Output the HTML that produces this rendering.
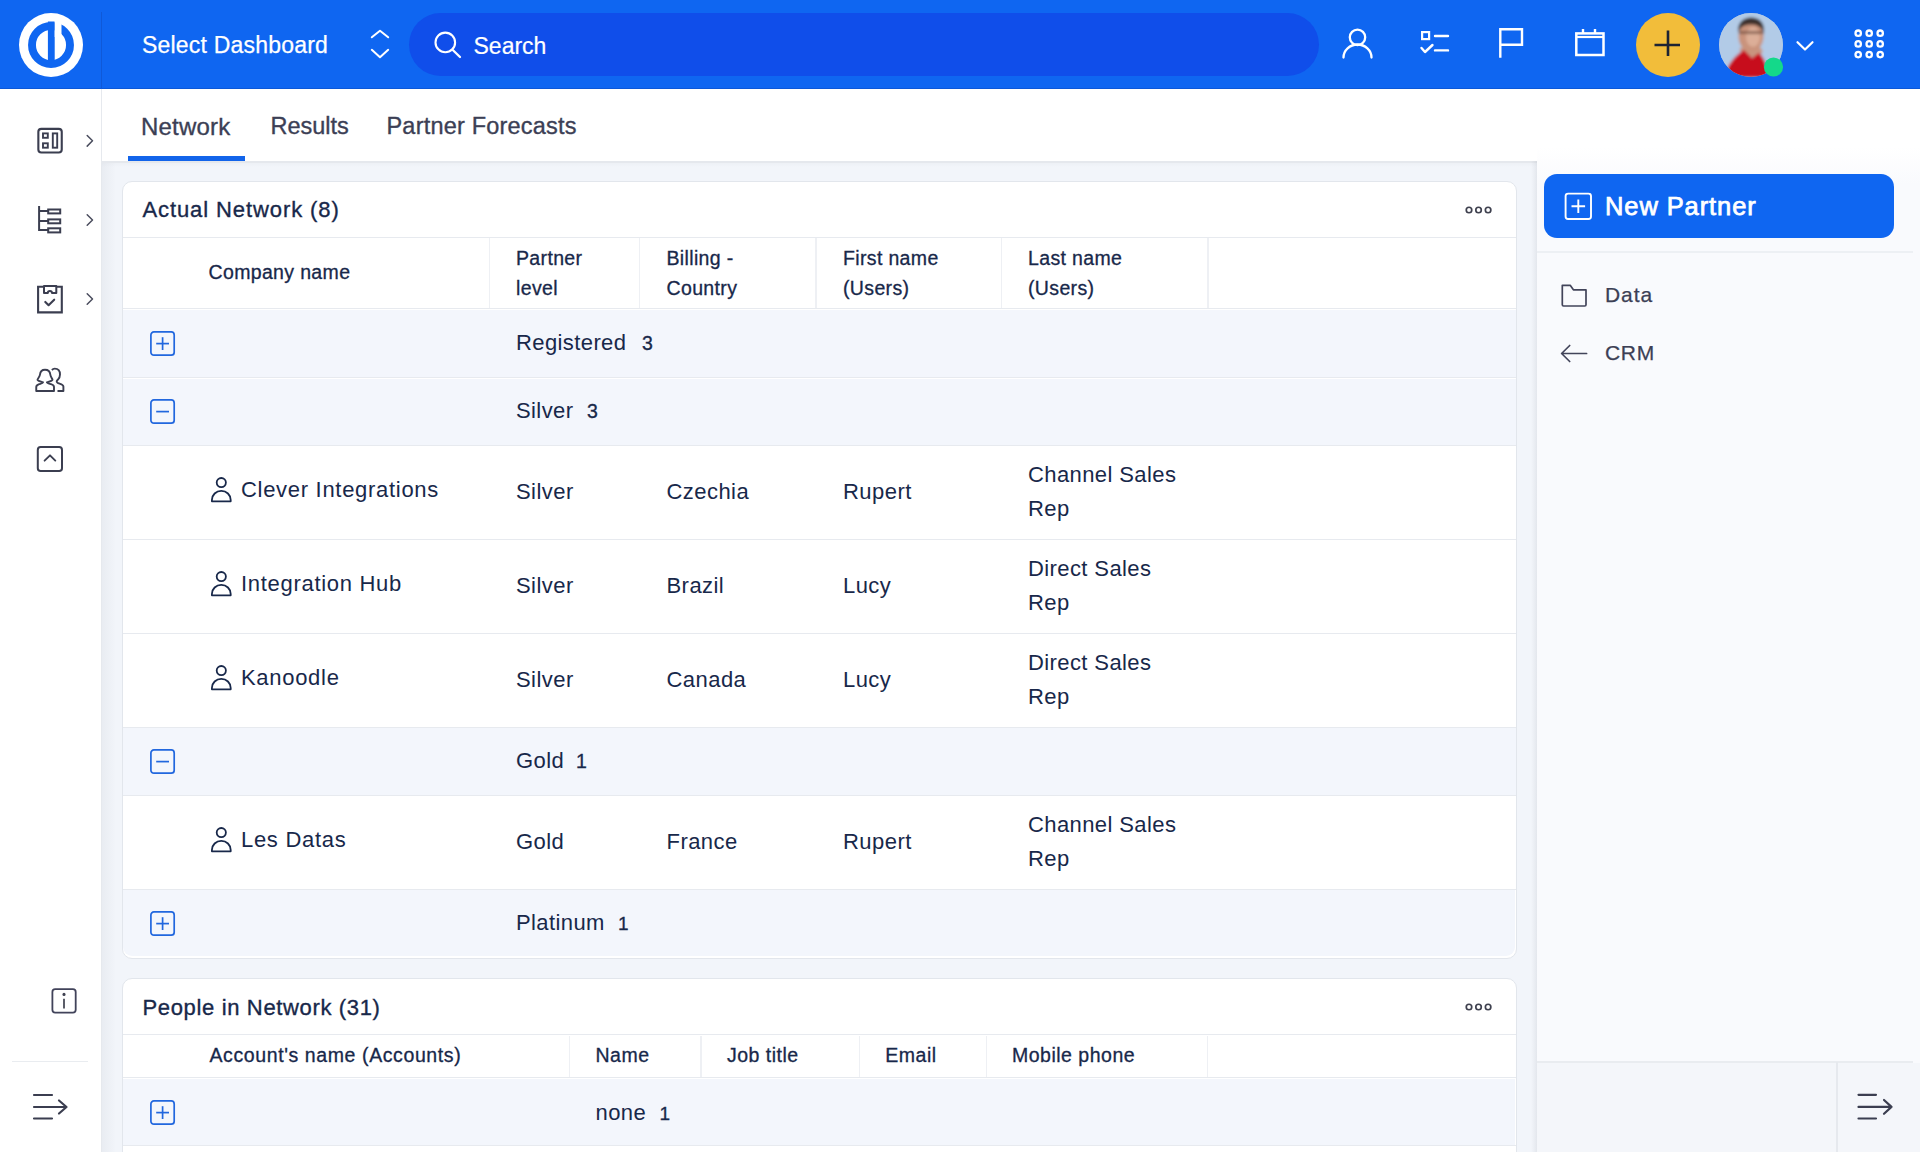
<!DOCTYPE html>
<html><head><meta charset="utf-8"><style>
html,body{margin:0;padding:0;width:1920px;height:1152px;overflow:hidden;background:#fff;font-family:"Liberation Sans", sans-serif}
.t{position:absolute;white-space:nowrap}
</style></head><body>
<div style="position:absolute;left:0px;top:0px;width:1920px;height:89px;background:#0f66f1"></div><div style="position:absolute;left:0px;top:88px;width:1920px;height:1px;background:#0b58d8"></div><svg style="position:absolute;left:0px;top:0px;" width="101" height="89" viewBox="0 0 101 89">
<circle cx="51" cy="45" r="32" fill="#fff"/>
<circle cx="51" cy="45" r="19" fill="none" stroke="#0f66f1" stroke-width="7.9"/>
<rect x="47.9" y="21.5" width="6.8" height="38.5" fill="#0f66f1"/>
<rect x="54.7" y="17" width="6.8" height="20" fill="#fff"/>
</svg><div style="position:absolute;left:101px;top:12px;width:1px;height:77px;background:#0f59d8"></div><div class="t" style="left:142.0px;top:33.8px;font-size:23px;line-height:23px;color:#fff;font-weight:400;-webkit-text-stroke:0.25px #fff;letter-spacing:0.2px;">Select Dashboard</div><svg style="position:absolute;left:366px;top:25px;" width="28" height="38" viewBox="0 0 28 38"><path d="M5.8 12.3 L14 5.7 L22.2 12.3 M5.8 24.8 L14 32.3 L22.2 24.8" fill="none" stroke="#fff" stroke-width="2" stroke-linecap="round" stroke-linejoin="round"/></svg><div style="position:absolute;left:409px;top:13px;width:910px;height:63px;background:#104eea;border-radius:32px"></div><svg style="position:absolute;left:430px;top:28px;" width="36" height="34" viewBox="0 0 36 34"><circle cx="15.3" cy="14.4" r="9.8" fill="none" stroke="#fff" stroke-width="2.1"/><path d="M22.8 22 L30 29" stroke="#fff" stroke-width="2.3" stroke-linecap="round"/></svg><div class="t" style="left:473.5px;top:34.5px;font-size:23px;line-height:23px;color:#fff;font-weight:400;-webkit-text-stroke:0.2px #fff;">Search</div><svg style="position:absolute;left:1338px;top:25px;" width="40" height="38" viewBox="0 0 40 38"><circle cx="19.5" cy="12.3" r="7.7" fill="none" stroke="#fff" stroke-width="2.3"/><path d="M5.5 32.5 A14 13 0 0 1 33.5 32.5" fill="none" stroke="#fff" stroke-width="2.3" stroke-linecap="round"/></svg><svg style="position:absolute;left:1416px;top:26px;" width="38" height="32" viewBox="0 0 38 32"><rect x="6.1" y="6.1" width="7" height="7" fill="none" stroke="#fff" stroke-width="2.2"/><path d="M19 10 H32 M19 24.4 H32" stroke="#fff" stroke-width="2.4" stroke-linecap="round"/><path d="M5.5 22 L9 26 L16.5 19" fill="none" stroke="#fff" stroke-width="2.4" stroke-linecap="round" stroke-linejoin="round"/></svg><svg style="position:absolute;left:1494px;top:24px;" width="34" height="38" viewBox="0 0 34 38"><path d="M6.3 33.8 V5.3 H28 V20.8 H6.3" fill="none" stroke="#fff" stroke-width="2.4" stroke-linejoin="miter"/></svg><svg style="position:absolute;left:1570px;top:24px;" width="40" height="36" viewBox="0 0 40 36"><rect x="6.3" y="9.4" width="27.2" height="21.6" fill="none" stroke="#fff" stroke-width="2.5"/><path d="M6.3 13 H33.5" stroke="#fff" stroke-width="2.2"/><path d="M13 5 V10 M25 5 V10" stroke="#fff" stroke-width="2.4"/></svg><svg style="position:absolute;left:1636px;top:13px;" width="64" height="64" viewBox="0 0 64 64"><circle cx="32" cy="32" r="32" fill="#f2bd3a"/><path d="M32 17.5 V43 M18.5 32 H44" stroke="#1d2333" stroke-width="2.6"/></svg><svg style="position:absolute;left:1719px;top:13px;" width="68" height="68" viewBox="0 0 68 68">
<defs><clipPath id="av"><circle cx="32" cy="32" r="32"/></clipPath>
<filter id="bl" x="-20%" y="-20%" width="140%" height="140%"><feGaussianBlur stdDeviation="1.4"/></filter></defs>
<g clip-path="url(#av)">
<rect width="64" height="64" fill="#b7cbe3"/>
<g filter="url(#bl)">
<rect x="0" y="0" width="64" height="64" fill="#b2cbe7"/>
<path d="M20 36 L26 33 L40 33 L44 38 L40 44 L26 44 Z" fill="#c99580"/>
<ellipse cx="32" cy="23" rx="12.5" ry="16" fill="#c9937b"/>
<ellipse cx="34" cy="24" rx="7" ry="10" fill="#dcae98"/>
<path d="M19 20 C18 9 25 4.5 32 4.5 C40 4.5 46 9 45 20 C42 13 37 11.5 32 11.5 C26 11.5 21 13.5 19 20 Z" fill="#3a2e2a"/>
<path d="M20 19.5 H45" stroke="#6e4b3b" stroke-width="2.6" opacity="0.8"/>
<path d="M4 64 L10 52 C15 44 20 40 25 37 L33 45 L40 40 C45 44 48 52 50 64 Z" fill="#c70f1f"/>
</g></g>
<circle cx="54.5" cy="54" r="9.6" fill="#14d98a"/>
</svg><svg style="position:absolute;left:1792px;top:36px;" width="26" height="20" viewBox="0 0 26 20"><path d="M5.5 6.2 L13 13.5 L20.5 6.2" fill="none" stroke="#fff" stroke-width="2.2" stroke-linecap="round" stroke-linejoin="round"/></svg><svg style="position:absolute;left:1853.5px;top:28.5px;" width="32" height="31" viewBox="0 0 32 31"><circle cx="4.2" cy="4.2" r="2.7" fill="none" stroke="#fff" stroke-width="2.3"/><circle cx="4.2" cy="14.899999999999999" r="2.7" fill="none" stroke="#fff" stroke-width="2.3"/><circle cx="4.2" cy="25.599999999999998" r="2.7" fill="none" stroke="#fff" stroke-width="2.3"/><circle cx="15.2" cy="4.2" r="2.7" fill="none" stroke="#fff" stroke-width="2.3"/><circle cx="15.2" cy="14.899999999999999" r="2.7" fill="none" stroke="#fff" stroke-width="2.3"/><circle cx="15.2" cy="25.599999999999998" r="2.7" fill="none" stroke="#fff" stroke-width="2.3"/><circle cx="26.2" cy="4.2" r="2.7" fill="none" stroke="#fff" stroke-width="2.3"/><circle cx="26.2" cy="14.899999999999999" r="2.7" fill="none" stroke="#fff" stroke-width="2.3"/><circle cx="26.2" cy="25.599999999999998" r="2.7" fill="none" stroke="#fff" stroke-width="2.3"/></svg><div style="position:absolute;left:0px;top:89px;width:101px;height:1063px;background:#fff"></div><div style="position:absolute;left:101px;top:89px;width:1px;height:1063px;background:#e6e9ee"></div><div style="position:absolute;left:102px;top:89px;width:4px;height:1063px;background:linear-gradient(to right, rgba(30,40,60,0.05), rgba(30,40,60,0))"></div><svg style="position:absolute;left:30px;top:120px;" width="40" height="40" viewBox="0 0 40 40"><rect x="8.35" y="8.85" width="23.4" height="23.6" rx="3" fill="none" stroke="#3b3e50" stroke-width="2.1"/><rect x="13" y="13.4" width="4.8" height="4.4" fill="none" stroke="#3b3e50" stroke-width="1.9"/><rect x="13" y="23.3" width="4.8" height="4.4" fill="none" stroke="#3b3e50" stroke-width="1.9"/><rect x="22.8" y="13.4" width="4.4" height="14.3" fill="none" stroke="#3b3e50" stroke-width="1.9"/></svg><svg style="position:absolute;left:30px;top:200px;" width="40" height="40" viewBox="0 0 40 40"><path d="M9.1 6 V30.9 M9.1 11.1 H18.2 M9.1 21 H18.2 M9.1 29.9 H18.2" fill="none" stroke="#3b3e50" stroke-width="2"/><rect x="18.2" y="9.5" width="12" height="3.9" fill="none" stroke="#3b3e50" stroke-width="2"/><rect x="18.2" y="19.4" width="12" height="3.9" fill="none" stroke="#3b3e50" stroke-width="2"/><rect x="18.2" y="28.3" width="12" height="4.1" fill="none" stroke="#3b3e50" stroke-width="2"/></svg><svg style="position:absolute;left:30px;top:280px;" width="40" height="40" viewBox="0 0 40 40"><path d="M14 6.8 H8.1 V32.4 H31.8 V6.8 H26.3" fill="none" stroke="#3b3e50" stroke-width="2.1"/><path d="M14 13.1 V5.9 H26.3 V13.1 H22 C22 11.8 21.2 11 19.9 11 C18.6 11 17.8 11.8 17.8 13.1 Z" fill="none" stroke="#3b3e50" stroke-width="2" stroke-linejoin="round"/><path d="M15.3 21.9 L18.6 25.2 L24.2 19.7" fill="none" stroke="#3b3e50" stroke-width="2.1" stroke-linecap="round" stroke-linejoin="round"/></svg><svg style="position:absolute;left:30px;top:360px;" width="40" height="40" viewBox="0 0 40 40"><path d="M13.1 22.3 C11 21.5 7.5 21 7.5 19.8 C7.5 18.5 9.8 17 10 14.5 C10.3 11 12 9.7 15 9.7 C18 9.7 20 11 20.3 14.5 C20.5 17 22.5 18.5 22.5 19.8 C22.5 21 19 21.5 16.9 22.3 C16.9 23.2 19 23.6 21 24.2 C23 24.8 24 25.5 24 27 V31 H6.25 V27 C6.25 25.5 7.5 24.8 9.2 24.2 C11 23.6 13.1 23.2 13.1 22.3 Z" fill="none" stroke="#3b3e50" stroke-width="1.9" stroke-linejoin="round"/><path d="M21.9 10 C22.8 9 23.8 8.6 24.7 8.6 C28 8.6 30 11 30 14.5 C30 16.5 29.5 18 28 19.5 C26.5 20.8 26.2 21.8 27.5 22.8 C29 23.8 33.4 24 33.4 26.5 V31 H27.5" fill="none" stroke="#3b3e50" stroke-width="1.9" stroke-linejoin="round"/></svg><svg style="position:absolute;left:30px;top:440px;" width="40" height="40" viewBox="0 0 40 40"><rect x="7.8" y="7.1" width="24.2" height="23.9" rx="2.8" fill="none" stroke="#3b3e50" stroke-width="2"/><path d="M14.6 20.7 L20 15.3 L25.3 20.6" fill="none" stroke="#3b3e50" stroke-width="1.9" stroke-linecap="round" stroke-linejoin="round"/></svg><svg style="position:absolute;left:80px;top:130px;" width="20" height="20" viewBox="0 0 20 20"><path d="M7.2 5.5000000000000115 L12.5 10.800000000000011 L7.2 16.100000000000012" fill="none" stroke="#4a4d5e" stroke-width="1.5" stroke-linecap="round" stroke-linejoin="round"/></svg><svg style="position:absolute;left:80px;top:210px;" width="20" height="20" viewBox="0 0 20 20"><path d="M7.2 4.7 L12.5 10 L7.2 15.3" fill="none" stroke="#4a4d5e" stroke-width="1.5" stroke-linecap="round" stroke-linejoin="round"/></svg><svg style="position:absolute;left:80px;top:289px;" width="20" height="20" viewBox="0 0 20 20"><path d="M7.2 4.7 L12.5 10 L7.2 15.3" fill="none" stroke="#4a4d5e" stroke-width="1.5" stroke-linecap="round" stroke-linejoin="round"/></svg><svg style="position:absolute;left:45px;top:982px;" width="40" height="40" viewBox="0 0 40 40"><rect x="7.4" y="7.1" width="23.3" height="23.5" rx="2.8" fill="none" stroke="#41435a" stroke-width="1.8"/><circle cx="19" cy="12.4" r="1.55" fill="#3f4150"/><path d="M19 16.8 V26.4" stroke="#4a4c58" stroke-width="1.8"/></svg><div style="position:absolute;left:12px;top:1061px;width:76px;height:1px;background:#e9ecf0"></div><svg style="position:absolute;left:28px;top:1085px;" width="46" height="40" viewBox="0 0 46 40"><path d="M6 10 H24 M6 22 H38.5 M6 33.5 H24 M31 15.5 L38.5 22 L31 28.5" fill="none" stroke="#3b3e50" stroke-width="2.2" stroke-linecap="round" stroke-linejoin="round"/></svg><div style="position:absolute;left:102px;top:89px;width:1435px;height:72px;background:#fff"></div><div class="t" style="left:141.0px;top:114.7px;font-size:24px;line-height:24px;color:#3c3f55;font-weight:400;-webkit-text-stroke:0.35px #3c3f55;letter-spacing:0.2px;">Network</div><div class="t" style="left:270.5px;top:115.1px;font-size:23.5px;line-height:23.5px;color:#3c3f55;font-weight:400;-webkit-text-stroke:0.35px #3c3f55;">Results</div><div class="t" style="left:386.5px;top:115.1px;font-size:23.5px;line-height:23.5px;color:#3c3f55;font-weight:400;-webkit-text-stroke:0.35px #3c3f55;letter-spacing:0.2px;">Partner Forecasts</div><div style="position:absolute;left:128px;top:156px;width:116.5px;height:5.2px;background:#1264ea"></div><div style="position:absolute;left:102px;top:161px;width:1435px;height:991px;background:#f2f5fa"></div><div style="position:absolute;left:102px;top:161px;width:14px;height:991px;background:linear-gradient(to right, rgba(30,40,60,0.045), rgba(30,40,60,0))"></div><div style="position:absolute;left:102px;top:161px;width:1435px;height:6px;background:linear-gradient(rgba(30,40,60,0.035), rgba(30,40,60,0))"></div><div style="position:absolute;left:102px;top:161px;width:1435px;height:1.5px;background:#e5e8ed"></div><div style="position:absolute;left:1531px;top:161px;width:6px;height:991px;background:linear-gradient(to right, rgba(30,40,60,0), rgba(30,40,60,0.04) 60%, rgba(30,40,60,0.07))"></div><div style="position:absolute;left:121.5px;top:180.5px;width:1395px;height:778px;background:#fff;border:1.5px solid #e2e6ec;border-radius:10px;box-sizing:border-box;overflow:hidden"></div><div class="t" style="left:142.5px;top:198.7px;font-size:22px;line-height:22px;color:#18284a;font-weight:400;-webkit-text-stroke:0.35px #18284a;letter-spacing:0.9px;">Actual Network (8)</div><svg style="position:absolute;left:1464.1999999999998px;top:204.5px;" width="30" height="10" viewBox="0 0 30 10"><circle cx="5.0" cy="5" r="2.75" fill="none" stroke="#3f414f" stroke-width="1.7"/><circle cx="14.55" cy="5" r="2.75" fill="none" stroke="#3f414f" stroke-width="1.7"/><circle cx="24.1" cy="5" r="2.75" fill="none" stroke="#3f414f" stroke-width="1.7"/></svg><div style="position:absolute;left:122.5px;top:236.6px;width:1393px;height:1.2px;background:#e7eaef"></div><div style="position:absolute;left:488.5px;top:238px;width:1.5px;height:70px;background:#eef0f4"></div><div style="position:absolute;left:638.5px;top:238px;width:1.5px;height:70px;background:#eef0f4"></div><div style="position:absolute;left:815.2px;top:238px;width:1.5px;height:70px;background:#eef0f4"></div><div style="position:absolute;left:1000.9px;top:238px;width:1.5px;height:70px;background:#eef0f4"></div><div style="position:absolute;left:1207.1px;top:238px;width:1.5px;height:70px;background:#eef0f4"></div><div class="t" style="left:208.5px;top:263.3px;font-size:19.5px;line-height:19.5px;color:#18284a;font-weight:400;-webkit-text-stroke:0.3px #18284a;letter-spacing:0.35px;">Company name</div><div class="t" style="left:516.0px;top:249.0px;font-size:19.5px;line-height:19.5px;color:#18284a;font-weight:400;-webkit-text-stroke:0.3px #18284a;letter-spacing:0.35px;">Partner</div><div class="t" style="left:516.0px;top:278.5px;font-size:19.5px;line-height:19.5px;color:#18284a;font-weight:400;-webkit-text-stroke:0.3px #18284a;letter-spacing:0.35px;">level</div><div class="t" style="left:666.5px;top:249.0px;font-size:19.5px;line-height:19.5px;color:#18284a;font-weight:400;-webkit-text-stroke:0.3px #18284a;letter-spacing:0.35px;">Billing -</div><div class="t" style="left:666.5px;top:278.5px;font-size:19.5px;line-height:19.5px;color:#18284a;font-weight:400;-webkit-text-stroke:0.3px #18284a;letter-spacing:0.35px;">Country</div><div class="t" style="left:843.0px;top:249.0px;font-size:19.5px;line-height:19.5px;color:#18284a;font-weight:400;-webkit-text-stroke:0.3px #18284a;letter-spacing:0.35px;">First name</div><div class="t" style="left:843.0px;top:278.5px;font-size:19.5px;line-height:19.5px;color:#18284a;font-weight:400;-webkit-text-stroke:0.3px #18284a;letter-spacing:0.35px;">(Users)</div><div class="t" style="left:1028.0px;top:249.0px;font-size:19.5px;line-height:19.5px;color:#18284a;font-weight:400;-webkit-text-stroke:0.3px #18284a;letter-spacing:0.35px;">Last name</div><div class="t" style="left:1028.0px;top:278.5px;font-size:19.5px;line-height:19.5px;color:#18284a;font-weight:400;-webkit-text-stroke:0.3px #18284a;letter-spacing:0.35px;">(Users)</div><div style="position:absolute;left:122.5px;top:308px;width:1393px;height:1.2px;background:#e7eaef"></div><div style="position:absolute;left:122.5px;top:309.5px;width:1393px;height:67.5px;background:#f3f6fc"></div><svg style="position:absolute;left:150.3px;top:330.5px;" width="26" height="26" viewBox="0 0 26 26"><rect x="0.9" y="0.9" width="23.3" height="23.3" rx="3" fill="none" stroke="#2167de" stroke-width="1.7"/><path d="M6.2 12.6 H19" stroke="#2167de" stroke-width="1.7"/><path d="M12.6 6.2 V19" stroke="#2167de" stroke-width="1.7"/></svg><div class="t" style="left:516.0px;top:331.8px;font-size:22px;line-height:22px;color:#18284a;font-weight:400;letter-spacing:0.4px;">Registered</div><div class="t" style="left:642.0px;top:333.9px;font-size:19.5px;line-height:19.5px;color:#18284a;font-weight:400;-webkit-text-stroke:0.3px #18284a;">3</div><div style="position:absolute;left:122.5px;top:377px;width:1393px;height:1.2px;background:#e7eaef"></div><div style="position:absolute;left:122.5px;top:378.5px;width:1393px;height:66.0px;background:#f3f6fc"></div><svg style="position:absolute;left:150.3px;top:398.75px;" width="26" height="26" viewBox="0 0 26 26"><rect x="0.9" y="0.9" width="23.3" height="23.3" rx="3" fill="none" stroke="#2167de" stroke-width="1.7"/><path d="M6.2 12.6 H19" stroke="#2167de" stroke-width="1.7"/></svg><div class="t" style="left:516.0px;top:400.0px;font-size:22px;line-height:22px;color:#18284a;font-weight:400;letter-spacing:0.4px;">Silver</div><div class="t" style="left:587.0px;top:402.1px;font-size:19.5px;line-height:19.5px;color:#18284a;font-weight:400;-webkit-text-stroke:0.3px #18284a;">3</div><div style="position:absolute;left:122.5px;top:444.5px;width:1393px;height:1.2px;background:#e7eaef"></div><svg style="position:absolute;left:210.3px;top:475.9px;" width="24" height="28" viewBox="0 0 24 28"><circle cx="11.3" cy="6.6" r="4.6" fill="none" stroke="#18284a" stroke-width="1.8"/><path d="M1.9 25.3 V24 A9.4 9.2 0 0 1 20.7 24 V25.3 Z" fill="none" stroke="#18284a" stroke-width="1.8" stroke-linejoin="round"/></svg><div class="t" style="left:241.0px;top:478.5px;font-size:22px;line-height:22px;color:#18284a;font-weight:400;letter-spacing:0.7px;">Clever Integrations</div><div class="t" style="left:516.0px;top:481.2px;font-size:22px;line-height:22px;color:#18284a;font-weight:400;letter-spacing:0.45px;">Silver</div><div class="t" style="left:666.5px;top:481.2px;font-size:22px;line-height:22px;color:#18284a;font-weight:400;letter-spacing:0.45px;">Czechia</div><div class="t" style="left:843.0px;top:481.2px;font-size:22px;line-height:22px;color:#18284a;font-weight:400;letter-spacing:0.45px;">Rupert</div><div class="t" style="left:1028.0px;top:464.3px;font-size:22px;line-height:22px;color:#18284a;font-weight:400;letter-spacing:0.4px;">Channel Sales</div><div class="t" style="left:1028.0px;top:497.6px;font-size:22px;line-height:22px;color:#18284a;font-weight:400;letter-spacing:0.4px;">Rep</div><div style="position:absolute;left:122.5px;top:538.5px;width:1393px;height:1.2px;background:#e7eaef"></div><svg style="position:absolute;left:210.3px;top:569.9px;" width="24" height="28" viewBox="0 0 24 28"><circle cx="11.3" cy="6.6" r="4.6" fill="none" stroke="#18284a" stroke-width="1.8"/><path d="M1.9 25.3 V24 A9.4 9.2 0 0 1 20.7 24 V25.3 Z" fill="none" stroke="#18284a" stroke-width="1.8" stroke-linejoin="round"/></svg><div class="t" style="left:241.0px;top:572.5px;font-size:22px;line-height:22px;color:#18284a;font-weight:400;letter-spacing:0.7px;">Integration Hub</div><div class="t" style="left:516.0px;top:575.2px;font-size:22px;line-height:22px;color:#18284a;font-weight:400;letter-spacing:0.45px;">Silver</div><div class="t" style="left:666.5px;top:575.2px;font-size:22px;line-height:22px;color:#18284a;font-weight:400;letter-spacing:0.45px;">Brazil</div><div class="t" style="left:843.0px;top:575.2px;font-size:22px;line-height:22px;color:#18284a;font-weight:400;letter-spacing:0.45px;">Lucy</div><div class="t" style="left:1028.0px;top:558.3px;font-size:22px;line-height:22px;color:#18284a;font-weight:400;letter-spacing:0.4px;">Direct Sales</div><div class="t" style="left:1028.0px;top:591.6px;font-size:22px;line-height:22px;color:#18284a;font-weight:400;letter-spacing:0.4px;">Rep</div><div style="position:absolute;left:122.5px;top:632.5px;width:1393px;height:1.2px;background:#e7eaef"></div><svg style="position:absolute;left:210.3px;top:663.9px;" width="24" height="28" viewBox="0 0 24 28"><circle cx="11.3" cy="6.6" r="4.6" fill="none" stroke="#18284a" stroke-width="1.8"/><path d="M1.9 25.3 V24 A9.4 9.2 0 0 1 20.7 24 V25.3 Z" fill="none" stroke="#18284a" stroke-width="1.8" stroke-linejoin="round"/></svg><div class="t" style="left:241.0px;top:666.5px;font-size:22px;line-height:22px;color:#18284a;font-weight:400;letter-spacing:0.7px;">Kanoodle</div><div class="t" style="left:516.0px;top:669.2px;font-size:22px;line-height:22px;color:#18284a;font-weight:400;letter-spacing:0.45px;">Silver</div><div class="t" style="left:666.5px;top:669.2px;font-size:22px;line-height:22px;color:#18284a;font-weight:400;letter-spacing:0.45px;">Canada</div><div class="t" style="left:843.0px;top:669.2px;font-size:22px;line-height:22px;color:#18284a;font-weight:400;letter-spacing:0.45px;">Lucy</div><div class="t" style="left:1028.0px;top:652.3px;font-size:22px;line-height:22px;color:#18284a;font-weight:400;letter-spacing:0.4px;">Direct Sales</div><div class="t" style="left:1028.0px;top:685.6px;font-size:22px;line-height:22px;color:#18284a;font-weight:400;letter-spacing:0.4px;">Rep</div><div style="position:absolute;left:122.5px;top:726.5px;width:1393px;height:1.2px;background:#e7eaef"></div><div style="position:absolute;left:122.5px;top:728.0px;width:1393px;height:66.5px;background:#f3f6fc"></div><svg style="position:absolute;left:150.3px;top:748.5px;" width="26" height="26" viewBox="0 0 26 26"><rect x="0.9" y="0.9" width="23.3" height="23.3" rx="3" fill="none" stroke="#2167de" stroke-width="1.7"/><path d="M6.2 12.6 H19" stroke="#2167de" stroke-width="1.7"/></svg><div class="t" style="left:516.0px;top:749.8px;font-size:22px;line-height:22px;color:#18284a;font-weight:400;letter-spacing:0.4px;">Gold</div><div class="t" style="left:576.0px;top:751.9px;font-size:19.5px;line-height:19.5px;color:#18284a;font-weight:400;-webkit-text-stroke:0.3px #18284a;">1</div><div style="position:absolute;left:122.5px;top:794.5px;width:1393px;height:1.2px;background:#e7eaef"></div><svg style="position:absolute;left:210.3px;top:825.9px;" width="24" height="28" viewBox="0 0 24 28"><circle cx="11.3" cy="6.6" r="4.6" fill="none" stroke="#18284a" stroke-width="1.8"/><path d="M1.9 25.3 V24 A9.4 9.2 0 0 1 20.7 24 V25.3 Z" fill="none" stroke="#18284a" stroke-width="1.8" stroke-linejoin="round"/></svg><div class="t" style="left:241.0px;top:828.5px;font-size:22px;line-height:22px;color:#18284a;font-weight:400;letter-spacing:0.7px;">Les Datas</div><div class="t" style="left:516.0px;top:831.2px;font-size:22px;line-height:22px;color:#18284a;font-weight:400;letter-spacing:0.45px;">Gold</div><div class="t" style="left:666.5px;top:831.2px;font-size:22px;line-height:22px;color:#18284a;font-weight:400;letter-spacing:0.45px;">France</div><div class="t" style="left:843.0px;top:831.2px;font-size:22px;line-height:22px;color:#18284a;font-weight:400;letter-spacing:0.45px;">Rupert</div><div class="t" style="left:1028.0px;top:814.3px;font-size:22px;line-height:22px;color:#18284a;font-weight:400;letter-spacing:0.4px;">Channel Sales</div><div class="t" style="left:1028.0px;top:847.6px;font-size:22px;line-height:22px;color:#18284a;font-weight:400;letter-spacing:0.4px;">Rep</div><div style="position:absolute;left:122.5px;top:888.5px;width:1393px;height:1.2px;background:#e7eaef"></div><div style="position:absolute;left:123.0px;top:890px;width:1392px;height:66px;background:#f3f6fc;border-radius:0 0 9px 9px"></div><svg style="position:absolute;left:150.3px;top:910.8px;" width="26" height="26" viewBox="0 0 26 26"><rect x="0.9" y="0.9" width="23.3" height="23.3" rx="3" fill="none" stroke="#2167de" stroke-width="1.7"/><path d="M6.2 12.6 H19" stroke="#2167de" stroke-width="1.7"/><path d="M12.6 6.2 V19" stroke="#2167de" stroke-width="1.7"/></svg><div class="t" style="left:516.0px;top:911.6px;font-size:22px;line-height:22px;color:#18284a;font-weight:400;letter-spacing:0.4px;">Platinum</div><div class="t" style="left:618.0px;top:914.1px;font-size:19px;line-height:19px;color:#18284a;font-weight:400;-webkit-text-stroke:0.3px #18284a;">1</div><div style="position:absolute;left:121.5px;top:977.5px;width:1395px;height:260px;background:#fff;border:1.5px solid #e2e6ec;border-radius:10px;box-sizing:border-box"></div><div class="t" style="left:142.5px;top:996.5px;font-size:22px;line-height:22px;color:#18284a;font-weight:400;-webkit-text-stroke:0.35px #18284a;letter-spacing:0.65px;">People in Network (31)</div><svg style="position:absolute;left:1464.1999999999998px;top:1002px;" width="30" height="10" viewBox="0 0 30 10"><circle cx="5.0" cy="5" r="2.75" fill="none" stroke="#3f414f" stroke-width="1.7"/><circle cx="14.55" cy="5" r="2.75" fill="none" stroke="#3f414f" stroke-width="1.7"/><circle cx="24.1" cy="5" r="2.75" fill="none" stroke="#3f414f" stroke-width="1.7"/></svg><div style="position:absolute;left:122.5px;top:1034.2px;width:1393px;height:1.2px;background:#e7eaef"></div><div style="position:absolute;left:568.5px;top:1035.5px;width:1.5px;height:42px;background:#eef0f4"></div><div style="position:absolute;left:700.1px;top:1035.5px;width:1.5px;height:42px;background:#eef0f4"></div><div style="position:absolute;left:858.7px;top:1035.5px;width:1.5px;height:42px;background:#eef0f4"></div><div style="position:absolute;left:985.5px;top:1035.5px;width:1.5px;height:42px;background:#eef0f4"></div><div style="position:absolute;left:1206.8px;top:1035.5px;width:1.5px;height:42px;background:#eef0f4"></div><div class="t" style="left:209.5px;top:1045.9px;font-size:19.5px;line-height:19.5px;color:#18284a;font-weight:400;-webkit-text-stroke:0.3px #18284a;letter-spacing:0.6px;">Account's name (Accounts)</div><div class="t" style="left:595.5px;top:1045.9px;font-size:19.5px;line-height:19.5px;color:#18284a;font-weight:400;-webkit-text-stroke:0.3px #18284a;letter-spacing:0.5px;">Name</div><div class="t" style="left:727.0px;top:1045.9px;font-size:19.5px;line-height:19.5px;color:#18284a;font-weight:400;-webkit-text-stroke:0.3px #18284a;letter-spacing:0.5px;">Job title</div><div class="t" style="left:885.3px;top:1045.9px;font-size:19.5px;line-height:19.5px;color:#18284a;font-weight:400;-webkit-text-stroke:0.3px #18284a;letter-spacing:0.5px;">Email</div><div class="t" style="left:1012.0px;top:1045.9px;font-size:19.5px;line-height:19.5px;color:#18284a;font-weight:400;-webkit-text-stroke:0.3px #18284a;letter-spacing:0.5px;">Mobile phone</div><div style="position:absolute;left:122.5px;top:1077.2px;width:1393px;height:1.2px;background:#e7eaef"></div><div style="position:absolute;left:123.0px;top:1078.7px;width:1392px;height:66px;background:#f3f6fc"></div><svg style="position:absolute;left:150.3px;top:1100.0px;" width="26" height="26" viewBox="0 0 26 26"><rect x="0.9" y="0.9" width="23.3" height="23.3" rx="3" fill="none" stroke="#2167de" stroke-width="1.7"/><path d="M6.2 12.6 H19" stroke="#2167de" stroke-width="1.7"/><path d="M12.6 6.2 V19" stroke="#2167de" stroke-width="1.7"/></svg><div class="t" style="left:595.5px;top:1101.7px;font-size:22px;line-height:22px;color:#18284a;font-weight:400;letter-spacing:0.4px;">none</div><div class="t" style="left:659.5px;top:1104.2px;font-size:19px;line-height:19px;color:#18284a;font-weight:400;-webkit-text-stroke:0.3px #18284a;">1</div><div style="position:absolute;left:122.5px;top:1144.8px;width:1393px;height:1.2px;background:#e7eaef"></div><div style="position:absolute;left:1537px;top:89px;width:383px;height:1063px;background:linear-gradient(#ffffff, #ffffff 58px, #f9fafd 95px, #f9fafd)"></div><div style="position:absolute;left:1544px;top:174px;width:350px;height:64px;background:#0f66f1;border-radius:13px"></div><svg style="position:absolute;left:1560px;top:188px;" width="38" height="38" viewBox="0 0 38 38"><rect x="5.6" y="5.6" width="25.4" height="25.4" rx="2.5" fill="none" stroke="#fff" stroke-width="1.9"/><path d="M18.3 11.5 V25.1 M11.5 18.3 H25.1" stroke="#fff" stroke-width="1.9"/></svg><div class="t" style="left:1605.0px;top:193.6px;font-size:25.5px;line-height:25.5px;color:#fff;font-weight:400;-webkit-text-stroke:0.75px #fff;letter-spacing:0.9px;">New Partner</div><div style="position:absolute;left:1537px;top:251px;width:376px;height:1.5px;background:#edf0f4"></div><svg style="position:absolute;left:1556px;top:280px;" width="36" height="32" viewBox="0 0 36 32"><path d="M6.3 24.8 V5.3 H14.2 L17.4 9.8 H30 V24.8 Q30 26 28.8 26 H7.5 Q6.3 26 6.3 24.8 Z" fill="none" stroke="#42445a" stroke-width="1.7" stroke-linejoin="round"/></svg><div class="t" style="left:1605.0px;top:284.2px;font-size:21px;line-height:21px;color:#3c3f55;font-weight:400;-webkit-text-stroke:0.25px #3c3f55;letter-spacing:0.9px;">Data</div><svg style="position:absolute;left:1556px;top:338px;" width="36" height="32" viewBox="0 0 36 32"><path d="M30.6 15.5 H6 M13.7 7.5 L5.6 15.5 L13.7 23.5" fill="none" stroke="#42445a" stroke-width="1.7" stroke-linecap="round" stroke-linejoin="round"/></svg><div class="t" style="left:1605.0px;top:341.9px;font-size:21px;line-height:21px;color:#3c3f55;font-weight:400;-webkit-text-stroke:0.25px #3c3f55;letter-spacing:0.7px;">CRM</div><div style="position:absolute;left:1537px;top:1061px;width:376px;height:1.5px;background:#e9ecf0"></div><div style="position:absolute;left:1537px;top:1062.5px;width:383px;height:90px;background:#f4f6fa"></div><div style="position:absolute;left:1836px;top:1062px;width:1.5px;height:90px;background:#e6e9ee"></div><svg style="position:absolute;left:1852px;top:1085px;" width="46" height="40" viewBox="0 0 46 40"><path d="M6.5 9.8 H24 M6.5 21.9 H39.5 M6.5 33.5 H24 M32 15 L39.5 21.9 L32 28.8" fill="none" stroke="#3b3e50" stroke-width="2.2" stroke-linecap="round" stroke-linejoin="round"/></svg>
</body></html>
